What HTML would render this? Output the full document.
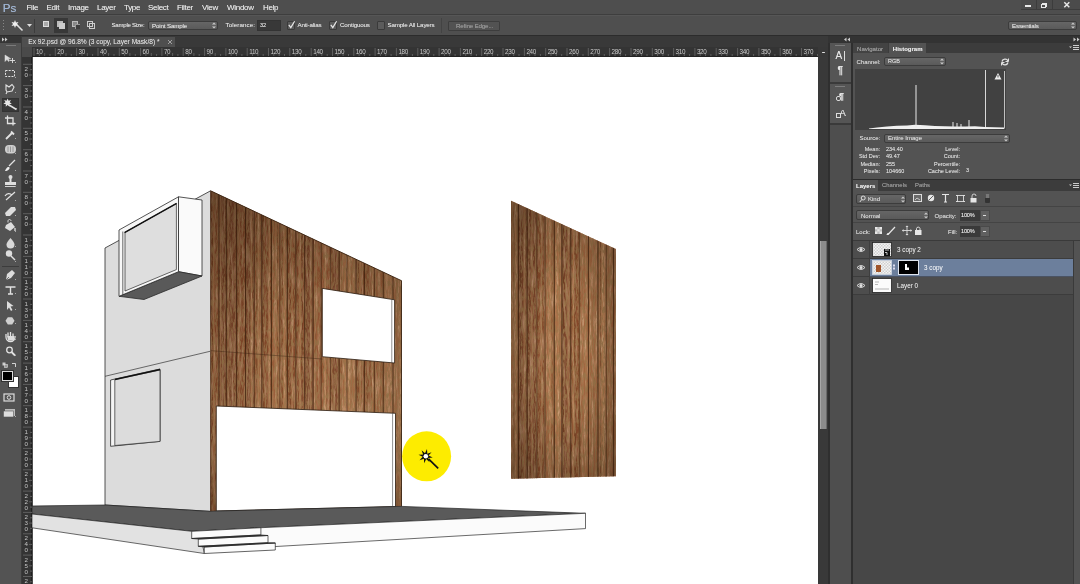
<!DOCTYPE html>
<html><head><meta charset="utf-8">
<style>
*{margin:0;padding:0;box-sizing:border-box}
html,body{width:1080px;height:584px;overflow:hidden;background:#535353;font-family:"Liberation Sans",sans-serif;color:#ddd}
.a{position:absolute}
.t{position:absolute;white-space:nowrap;line-height:1;text-shadow:0 0 0.6px rgba(240,240,240,0.55)}
.m{font-size:8px;color:#e4e4e4;top:3.6px;letter-spacing:-0.3px}
.o{font-size:6.2px;color:#e0e0e0;top:22px;letter-spacing:-0.15px}
.p{font-size:5.9px;color:#d8d8d8}
.cb{position:absolute;width:8px;height:9px;background:#5b5b5b;border:1px solid #3a3a3a;border-radius:1px}
.sel{position:absolute;background:linear-gradient(#666,#5a5a5a);border:1px solid #3c3c3c;border-radius:2px}
.ru{position:absolute;top:48px;font-size:5.6px;color:#cfcfcf;line-height:1}
.tk{position:absolute;top:48px;width:1px;height:8px;background:#555}
html{filter:blur(0.4px)}
</style></head><body>
<!-- menu bar -->
<div class="a" style="left:0;top:0;width:1080px;height:14px;background:#4e4e4e"></div>
<div class="a" style="left:0;top:14px;width:1080px;height:1px;background:#3e3e3e"></div>
<div class="a" style="left:0;top:15px;width:1080px;height:1px;background:#565656"></div>
<div class="t" style="left:2.8px;top:1.8px;font-size:11.6px;color:#9ab3d6;letter-spacing:0px">Ps</div>
<div class="t m" style="left:26.5px">File</div>
<div class="t m" style="left:46.5px">Edit</div>
<div class="t m" style="left:68px">Image</div>
<div class="t m" style="left:97px">Layer</div>
<div class="t m" style="left:124px">Type</div>
<div class="t m" style="left:148px">Select</div>
<div class="t m" style="left:177px">Filter</div>
<div class="t m" style="left:202px">View</div>
<div class="t m" style="left:227px">Window</div>
<div class="t m" style="left:263px">Help</div>
<!-- window buttons -->
<div class="a" style="left:1021px;top:0;width:59px;height:10px;background:#4b4b4b;border-bottom:1px solid #3c3c3c"></div>
<div class="a" style="left:1036px;top:0;width:1px;height:10px;background:#3c3c3c"></div>
<div class="a" style="left:1052px;top:0;width:1px;height:10px;background:#3c3c3c"></div>
<div class="a" style="left:1025px;top:5px;width:6px;height:2px;background:#e8e8e8"></div>
<div class="a" style="left:1042px;top:3px;width:5px;height:4px;border:1px solid #e8e8e8"></div>
<div class="a" style="left:1041px;top:4px;width:5px;height:4px;border:1px solid #e8e8e8;background:#4b4b4b"></div>
<svg class="a" style="left:1062px;top:1px" width="10" height="9"><path d="M2.3 1.3L7.3 6.3M7.3 1.3L2.3 6.3" stroke="#e8e8e8" stroke-width="1.5"/></svg>

<!-- options bar -->
<div class="a" style="left:0;top:16px;width:1080px;height:19px;background:#4f4f4f"></div>
<div class="a" style="left:0;top:35px;width:1080px;height:1px;background:#2c2c2c"></div>
<div class="a" style="left:3px;top:20px;width:1px;height:1px;background:#888"></div>
<div class="a" style="left:3px;top:23px;width:1px;height:1px;background:#888"></div>
<div class="a" style="left:3px;top:26px;width:1px;height:1px;background:#888"></div>
<div class="a" style="left:3px;top:29px;width:1px;height:1px;background:#888"></div>
<svg class="a" style="left:11px;top:19px" width="14" height="13"><path d="M5 5L11.5 11.5" stroke="#e0e0e0" stroke-width="1.6"/><path d="M4 1L5 3.5 7.5 3 6 5 7.5 7 5 6.5 4 9 3 6.5 0.5 7 2 5 0.5 3 3 3.5Z" fill="#eee"/></svg>
<svg class="a" style="left:27px;top:24px" width="5" height="3"><path d="M0 0H5L2.5 3Z" fill="#ddd"/></svg>
<div class="a" style="left:34px;top:19px;width:1px;height:14px;background:#3c3c3c"></div>
<div class="a" style="left:43px;top:21px;width:6px;height:6px;background:#aaa;border:1px solid #ddd"></div>
<div class="a" style="left:54px;top:18px;width:14px;height:15px;background:#383838"></div>
<div class="a" style="left:57px;top:21px;width:6px;height:6px;background:#bbb"></div>
<div class="a" style="left:59px;top:23px;width:6px;height:6px;background:#ccc"></div>
<div class="a" style="left:72px;top:21px;width:6px;height:6px;border:1px solid #bbb;background:#888"></div>
<div class="a" style="left:75px;top:24px;width:5px;height:5px;background:#3d3d3d;border-top:1px solid #999;border-left:1px solid #999"></div>
<div class="a" style="left:87px;top:21px;width:6px;height:6px;border:1px solid #ccc"></div>
<div class="a" style="left:89px;top:23px;width:6px;height:6px;border:1px solid #ccc"></div>

<div class="t o" style="left:111.5px;font-size:6.1px;letter-spacing:-0.25px">Sample Size:</div>
<div class="sel" style="left:148px;top:21px;width:70px;height:9px"></div>
<div class="t o" style="left:152px;top:22.5px">Point Sample</div>
<svg class="a" style="left:212px;top:22px" width="4" height="7"><path d="M0 2.5L2 0.5 4 2.5ZM0 4.5L2 6.5 4 4.5Z" fill="#ccc"/></svg>
<div class="t o" style="left:225.5px;letter-spacing:0.1px">Tolerance:</div>
<div class="a" style="left:257px;top:20px;width:24px;height:11px;background:#383838;border:1px solid #333"></div>
<div class="t o" style="left:260px;top:22.5px;font-size:5.5px">32</div>
<div class="cb" style="left:287px;top:20.5px"></div>
<svg class="a" style="left:287px;top:20px" width="10" height="10"><path d="M1.8 4.8L3.8 7.6 7.6 1.2" stroke="#e8e8e8" stroke-width="1.2" fill="none"/></svg>
<div class="t o" style="left:297.5px">Anti-alias</div>
<div class="cb" style="left:329px;top:20.5px"></div>
<svg class="a" style="left:329px;top:20px" width="10" height="10"><path d="M1.8 4.8L3.8 7.6 7.6 1.2" stroke="#e8e8e8" stroke-width="1.2" fill="none"/></svg>
<div class="t o" style="left:340px">Contiguous</div>
<div class="cb" style="left:377px;top:20.5px"></div>
<div class="t o" style="left:387.5px">Sample All Layers</div>
<div class="a" style="left:441px;top:18px;width:1px;height:15px;background:#434343"></div>
<div class="a" style="left:448px;top:21px;width:52px;height:9.5px;background:#525252;border:1px solid #3d3d3d;border-radius:1px"></div>
<div class="t o" style="left:456px;top:23px;color:#8a8a8a">Refine Edge...</div>
<div class="sel" style="left:1008px;top:21px;width:69px;height:9px"></div>
<div class="t o" style="left:1012px;top:22.5px">Essentials</div>
<svg class="a" style="left:1071px;top:22px" width="4" height="7"><path d="M0 2.5L2 0.5 4 2.5ZM0 4.5L2 6.5 4 4.5Z" fill="#ccc"/></svg>

<!-- doc tab bar -->
<div class="a" style="left:0;top:36px;width:828px;height:11px;background:#393939"></div>
<div class="a" style="left:22px;top:36.5px;width:153px;height:10.5px;background:#4f4f4f"></div>
<div class="t" style="left:28.3px;top:38.5px;font-size:6.6px;color:#d8d8d8">Ex 92.psd @ 96.8% (3 copy, Layer Mask/8) *</div>
<svg class="a" style="left:167px;top:39px" width="6" height="6"><path d="M1 1L5 5M5 1L1 5" stroke="#aaa" stroke-width="0.9"/></svg>
<div class="a" style="left:32px;top:57px;width:786px;height:527px;background:#fff"></div>
<svg class="a" style="left:22px;top:47px" width="796" height="10"><rect x="10" width="786" height="10" fill="#343434"/><rect width="10" height="10" fill="#4a4a4a"/><rect x="10" y="8.6" width="786" height="1.4" fill="#232323"/><path d="M12.0 1V9 M17.3 7V9 M22.7 6V9 M28.0 7V9 M33.3 1V9 M38.6 7V9 M44.0 6V9 M49.3 7V9 M54.6 1V9 M60.0 7V9 M65.3 6V9 M70.6 7V9 M76.0 1V9 M81.3 7V9 M86.6 6V9 M92.0 7V9 M97.3 1V9 M102.6 7V9 M107.9 6V9 M113.3 7V9 M118.6 1V9 M123.9 7V9 M129.3 6V9 M134.6 7V9 M139.9 1V9 M145.3 7V9 M150.6 6V9 M155.9 7V9 M161.2 1V9 M166.6 7V9 M171.9 6V9 M177.2 7V9 M182.6 1V9 M187.9 7V9 M193.2 6V9 M198.6 7V9 M203.9 1V9 M209.2 7V9 M214.5 6V9 M219.9 7V9 M225.2 1V9 M230.5 7V9 M235.9 6V9 M241.2 7V9 M246.5 1V9 M251.8 7V9 M257.2 6V9 M262.5 7V9 M267.8 1V9 M273.2 7V9 M278.5 6V9 M283.8 7V9 M289.2 1V9 M294.5 7V9 M299.8 6V9 M305.2 7V9 M310.5 1V9 M315.8 7V9 M321.1 6V9 M326.5 7V9 M331.8 1V9 M337.1 7V9 M342.5 6V9 M347.8 7V9 M353.1 1V9 M358.4 7V9 M363.8 6V9 M369.1 7V9 M374.4 1V9 M379.8 7V9 M385.1 6V9 M390.4 7V9 M395.8 1V9 M401.1 7V9 M406.4 6V9 M411.8 7V9 M417.1 1V9 M422.4 7V9 M427.7 6V9 M433.1 7V9 M438.4 1V9 M443.7 7V9 M449.1 6V9 M454.4 7V9 M459.7 1V9 M465.1 7V9 M470.4 6V9 M475.7 7V9 M481.0 1V9 M486.4 7V9 M491.7 6V9 M497.0 7V9 M502.4 1V9 M507.7 7V9 M513.0 6V9 M518.4 7V9 M523.7 1V9 M529.0 7V9 M534.3 6V9 M539.7 7V9 M545.0 1V9 M550.3 7V9 M555.7 6V9 M561.0 7V9 M566.3 1V9 M571.7 7V9 M577.0 6V9 M582.3 7V9 M587.6 1V9 M593.0 7V9 M598.3 6V9 M603.6 7V9 M609.0 1V9 M614.3 7V9 M619.6 6V9 M625.0 7V9 M630.3 1V9 M635.6 7V9 M640.9 6V9 M646.3 7V9 M651.6 1V9 M656.9 7V9 M662.3 6V9 M667.6 7V9 M672.9 1V9 M678.2 7V9 M683.6 6V9 M688.9 7V9 M694.2 1V9 M699.6 7V9 M704.9 6V9 M710.2 7V9 M715.6 1V9 M720.9 7V9 M726.2 6V9 M731.6 7V9 M736.9 1V9 M742.2 7V9 M747.5 6V9 M752.9 7V9 M758.2 1V9 M763.5 7V9 M768.9 6V9 M774.2 7V9 M779.5 1V9 M784.9 7V9 M790.2 6V9 M795.5 7V9" stroke="#5e5e5e" stroke-width="1"/><g font-family="Liberation Sans" font-size="6.3" fill="#cacaca" letter-spacing="-0.3"><text x="14.0" y="7">10</text><text x="35.3" y="7">20</text><text x="56.6" y="7">30</text><text x="78.0" y="7">40</text><text x="99.3" y="7">50</text><text x="120.6" y="7">60</text><text x="141.9" y="7">70</text><text x="163.2" y="7">80</text><text x="184.6" y="7">90</text><text x="205.9" y="7">100</text><text x="227.2" y="7">110</text><text x="248.5" y="7">120</text><text x="269.8" y="7">130</text><text x="291.2" y="7">140</text><text x="312.5" y="7">150</text><text x="333.8" y="7">160</text><text x="355.1" y="7">170</text><text x="376.4" y="7">180</text><text x="397.8" y="7">190</text><text x="419.1" y="7">200</text><text x="440.4" y="7">210</text><text x="461.7" y="7">220</text><text x="483.0" y="7">230</text><text x="504.4" y="7">240</text><text x="525.7" y="7">250</text><text x="547.0" y="7">260</text><text x="568.3" y="7">270</text><text x="589.6" y="7">280</text><text x="611.0" y="7">290</text><text x="632.3" y="7">300</text><text x="653.6" y="7">310</text><text x="674.9" y="7">320</text><text x="696.2" y="7">330</text><text x="717.6" y="7">340</text><text x="738.9" y="7">350</text><text x="760.2" y="7">360</text><text x="781.5" y="7">370</text></g></svg>
<svg class="a" style="left:22px;top:57px" width="11" height="527"><rect width="10" height="527" fill="#343434"/><rect x="9" width="1.8" height="527" fill="#202020"/><path d="M1 7.3H10 M8 12.6H10 M7 18.0H10 M8 23.3H10 M1 28.6H10 M8 34.0H10 M7 39.3H10 M8 44.6H10 M1 50.0H10 M8 55.3H10 M7 60.6H10 M8 66.0H10 M1 71.3H10 M8 76.6H10 M7 82.0H10 M8 87.3H10 M1 92.7H10 M8 98.0H10 M7 103.3H10 M8 108.6H10 M1 114.0H10 M8 119.3H10 M7 124.7H10 M8 130.0H10 M1 135.3H10 M8 140.7H10 M7 146.0H10 M8 151.3H10 M1 156.7H10 M8 162.0H10 M7 167.3H10 M8 172.7H10 M1 178.0H10 M8 183.3H10 M7 188.7H10 M8 194.0H10 M1 199.4H10 M8 204.7H10 M7 210.0H10 M8 215.4H10 M1 220.7H10 M8 226.0H10 M7 231.4H10 M8 236.7H10 M1 242.0H10 M8 247.4H10 M7 252.7H10 M8 258.0H10 M1 263.4H10 M8 268.7H10 M7 274.0H10 M8 279.4H10 M1 284.7H10 M8 290.1H10 M7 295.4H10 M8 300.7H10 M1 306.1H10 M8 311.4H10 M7 316.7H10 M8 322.1H10 M1 327.4H10 M8 332.7H10 M7 338.1H10 M8 343.4H10 M1 348.7H10 M8 354.1H10 M7 359.4H10 M8 364.7H10 M1 370.1H10 M8 375.4H10 M7 380.7H10 M8 386.1H10 M1 391.4H10 M8 396.8H10 M7 402.1H10 M8 407.4H10 M1 412.8H10 M8 418.1H10 M7 423.4H10 M8 428.8H10 M1 434.1H10 M8 439.4H10 M7 444.8H10 M8 450.1H10 M1 455.4H10 M8 460.8H10 M7 466.1H10 M8 471.4H10 M1 476.8H10 M8 482.1H10 M7 487.4H10 M8 492.8H10 M1 498.1H10 M8 503.4H10 M7 508.8H10 M8 514.1H10 M1 519.5H10 M8 524.8H10 M7 530.1H10 M8 535.4H10" stroke="#5e5e5e" stroke-width="1"/><g font-family="Liberation Sans" font-size="6.2" fill="#c4c4c4"><text x="2.5" y="13.8">2</text><text x="2.5" y="19.8">0</text><text x="2.5" y="35.1">3</text><text x="2.5" y="41.1">0</text><text x="2.5" y="56.5">4</text><text x="2.5" y="62.5">0</text><text x="2.5" y="77.8">5</text><text x="2.5" y="83.8">0</text><text x="2.5" y="99.2">6</text><text x="2.5" y="105.2">0</text><text x="2.5" y="120.5">7</text><text x="2.5" y="126.5">0</text><text x="2.5" y="141.8">8</text><text x="2.5" y="147.8">0</text><text x="2.5" y="163.2">9</text><text x="2.5" y="169.2">0</text><text x="2.5" y="184.5">1</text><text x="2.5" y="190.5">0</text><text x="2.5" y="196.5">0</text><text x="2.5" y="205.9">1</text><text x="2.5" y="211.9">1</text><text x="2.5" y="217.9">0</text><text x="2.5" y="227.2">1</text><text x="2.5" y="233.2">2</text><text x="2.5" y="239.2">0</text><text x="2.5" y="248.5">1</text><text x="2.5" y="254.5">3</text><text x="2.5" y="260.5">0</text><text x="2.5" y="269.9">1</text><text x="2.5" y="275.9">4</text><text x="2.5" y="281.9">0</text><text x="2.5" y="291.2">1</text><text x="2.5" y="297.2">5</text><text x="2.5" y="303.2">0</text><text x="2.5" y="312.6">1</text><text x="2.5" y="318.6">6</text><text x="2.5" y="324.6">0</text><text x="2.5" y="333.9">1</text><text x="2.5" y="339.9">7</text><text x="2.5" y="345.9">0</text><text x="2.5" y="355.2">1</text><text x="2.5" y="361.2">8</text><text x="2.5" y="367.2">0</text><text x="2.5" y="376.6">1</text><text x="2.5" y="382.6">9</text><text x="2.5" y="388.6">0</text><text x="2.5" y="397.9">2</text><text x="2.5" y="403.9">0</text><text x="2.5" y="409.9">0</text><text x="2.5" y="419.3">2</text><text x="2.5" y="425.3">1</text><text x="2.5" y="431.3">0</text><text x="2.5" y="440.6">2</text><text x="2.5" y="446.6">2</text><text x="2.5" y="452.6">0</text><text x="2.5" y="461.9">2</text><text x="2.5" y="467.9">3</text><text x="2.5" y="473.9">0</text><text x="2.5" y="483.3">2</text><text x="2.5" y="489.3">4</text><text x="2.5" y="495.3">0</text><text x="2.5" y="504.6">2</text><text x="2.5" y="510.6">5</text><text x="2.5" y="516.6">0</text><text x="2.5" y="526.0">2</text><text x="2.5" y="532.0">6</text><text x="2.5" y="538.0">0</text></g></svg>
<!-- toolbar -->
<div class="a" style="left:0;top:36px;width:21px;height:548px;background:#535353"></div>
<div class="a" style="left:0;top:36px;width:21px;height:7px;background:#363636"></div>
<div class="a" style="left:21px;top:36px;width:1px;height:548px;background:#3b3b3b"></div>
<svg class="a" style="left:2px;top:37px" width="6" height="5"><path d="M0 0.5L2.5 2.5 0 4.5ZM3 0.5L5.5 2.5 3 4.5Z" fill="#ccc"/></svg>
<div class="a" style="left:6px;top:45px;width:10px;height:1px;background:#7a7a7a"></div>
<div class="a" style="left:1.5px;top:98px;width:17.5px;height:13.5px;background:#383838;border:1px solid #333"></div>
<div class="a" style="left:2px;top:266px;width:17px;height:1px;background:#3c3c3c"></div>
<svg class="a" style="left:0;top:50px" width="21" height="380" fill="none" stroke="#e2e2e2" stroke-width="1.2">
 <!-- move y58 -->
 <path d="M5 5V11.5L7 9.5 8.5 11.5 9.5 10.8 8.3 8.8H10.8Z" fill="#ddd" stroke="#ddd" stroke-width="0.5"/><path d="M12.5 8V13M10 10.5H15" stroke-width="0.9"/>
 <!-- marquee y74 -->
 <rect x="5.5" y="20.5" width="9" height="6" stroke-dasharray="2 1.2" stroke-width="1"/>
 <!-- lasso y89 -->
 <path d="M6 35L9 37 12 34.5 14 37 12 41 7 42 6 40Z M7 42L6 44" stroke-width="1.1"/>
 <!-- wand y102 -->
 <path d="M9 55L16.5 59.5" stroke-width="1.5"/><path d="M7.6 48.5L8.6 50.8L11.0 50.1L9.7 52.3L11.8 53.8L9.3 54.2L9.5 56.7L7.6 55.0L5.7 56.7L5.9 54.2L3.4 53.8L5.5 52.3L4.2 50.1L6.6 50.8Z" fill="#e6e6e6" stroke="none"/>
 <!-- crop y122 -->
 <path d="M7.5 65.5V73.5H15M5 68H13V75.5" stroke-width="1.3"/>
 <!-- eyedropper y134 -->
 <path d="M6 89L12 83M11 81.5L14 84.5" stroke-width="1.8"/>
 <!-- heal y149 -->
 <rect x="5" y="95" width="11" height="8.5" rx="4" fill="#cfcfcf" stroke="none"/><path d="M8 96.5V102M10.5 96.5V102M13 96.5V102" stroke="#8a8a8a" stroke-width="0.8"/>
 <!-- brush y167 -->
 <path d="M9 116L15 110" stroke-width="1.3"/><path d="M5 121C6 118 8 116 9.5 117.5 10 119 8 121 5 121Z" fill="#eee" stroke="none"/>
 <!-- stamp y182 -->
 <path d="M10.5 127V132" stroke-width="2"/><circle cx="10.5" cy="127" r="2" fill="#ddd" stroke="none"/><rect x="5" y="132" width="11" height="3" fill="#ddd" stroke="none"/><path d="M5 136.5H16" stroke-width="0.9"/>
 <!-- history brush y197 -->
 <path d="M6 150L15 142M5 146C7 143 10 143 12 145" stroke-width="1.2"/>
 <!-- eraser y212 -->
 <path d="M5 163L11 157H15L16 160 10 166H6Z" fill="#ddd" stroke="none"/>
 <!-- bucket y227 -->
 <path d="M6 175L11 172 15 177 10 181 5 178Z" fill="#ddd" stroke="none"/><path d="M8 172.5V171C8 169 11 169 11 171" stroke-width="0.9"/><path d="M15 178V181" stroke-width="1.3"/>
 <!-- blur drop y242 -->
 <path d="M10.5 188C8 191 6.5 193 6.5 194.5A4 4 0 0 0 14.5 194.5C14.5 193 13 191 10.5 188Z" fill="#d8d8d8" stroke="none"/>
 <!-- dodge y256 -->
 <circle cx="9" cy="203.5" r="3.2" fill="#ddd" stroke="none"/><path d="M11 206L15 210" stroke-width="1.4"/>
 <!-- pen y275 -->
 <path d="M6 230L7 224 12 220 15 223 11 228Z" fill="#ddd" stroke="none"/><path d="M6 230L9 227" stroke="#555" stroke-width="0.8"/>
 <!-- type y290 -->
 <path d="M5.5 237H15.5M10.5 237V244M8 244H13" stroke-width="1.4"/>
 <!-- path select y305 -->
 <path d="M7 251V260L9 257.5 11 261 12.5 260 10.5 256.5 13.5 256Z" fill="#ddd" stroke="none"/>
 <!-- shape y320 -->
 <path d="M5.5 270.8L7.8 267.3H12.2L14.5 270.8 12.2 274.5H7.8Z" fill="#cfcfcf" stroke="none"/>
 <!-- hand y337 -->
 <path d="M6 287V284M8 286V282.5M10.5 286V282M13 286V283.5M6 287C6 289.5 8 291.5 10.5 291.5 13 291.5 15 289.5 15 287V286" stroke-width="1.3"/><path d="M7 286H14V290.5H8Z" fill="#ddd" stroke="none"/>
 <!-- zoom y352 -->
 <circle cx="9.5" cy="300" r="2.8" stroke-width="1.3"/><path d="M11.5 302L15 305.5" stroke-width="1.8"/>
 <!-- default colors swap y364 -->
 <rect x="2.5" y="312.5" width="3" height="3" fill="#ccc" stroke="none"/><rect x="4.5" y="314.5" width="3" height="3" fill="#999" stroke="#ddd" stroke-width="0.6"/><path d="M12 313.5H15.5V317" stroke-width="0.9"/>
</svg>
<div class="a" style="left:7.5px;top:376px;width:11px;height:12px;background:#fff;border:1px solid #333"></div>
<div class="a" style="left:2px;top:370.5px;width:10.5px;height:10.5px;background:#000;border:1px solid #ddd;outline:1px solid #333"></div>
<svg class="a" style="left:0;top:390px" width="21" height="30" fill="none" stroke="#ddd">
 <rect x="4" y="4" width="10" height="7" stroke-width="1.2"/><circle cx="9" cy="7.5" r="1.8" stroke-width="1"/>
 <rect x="5" y="19" width="10" height="7" fill="#bbb" stroke="none"/><rect x="3.5" y="21" width="10" height="6" fill="#ddd" stroke="#555" stroke-width="0.6"/>
</svg>
<svg class="a" style="left:14px;top:60px" width="7" height="360" fill="#aaa">
<rect x="1" y="2" width="1" height="1"/><rect x="1" y="17" width="1" height="1"/><rect x="1" y="32" width="1" height="1"/><rect x="2" y="48" width="1" height="1"/><rect x="1" y="63" width="1" height="1"/><rect x="1" y="78" width="1" height="1"/><rect x="1" y="93" width="1" height="1"/><rect x="1" y="110" width="1" height="1"/><rect x="1" y="126" width="1" height="1"/><rect x="1" y="140" width="1" height="1"/><rect x="1" y="155" width="1" height="1"/><rect x="1" y="171" width="1" height="1"/><rect x="1" y="186" width="1" height="1"/><rect x="1" y="201" width="1" height="1"/><rect x="1" y="219" width="1" height="1"/><rect x="1" y="233" width="1" height="1"/><rect x="1" y="249" width="1" height="1"/><rect x="1" y="263" width="1" height="1"/><rect x="1" y="279" width="1" height="1"/><rect x="1" y="295" width="1" height="1"/><rect x="1" y="356" width="1" height="1"/>
</svg>

<svg class="a" style="left:32px;top:57px" width="786" height="527" viewBox="32 57 786 527">
<defs>
<filter id="grain" x="0" y="0" width="100%" height="100%"><feTurbulence type="fractalNoise" baseFrequency="0.5 0.045" numOctaves="3" seed="3"/><feColorMatrix values="0 0 0 0 0.80  0 0 0 0 0.56  0 0 0 0 0.36  2.8 0 0 0 -1.15"/></filter>
<filter id="grain2" x="0" y="0" width="100%" height="100%"><feTurbulence type="fractalNoise" baseFrequency="0.9 0.15" numOctaves="3" seed="11"/><feColorMatrix values="0 0 0 0 0.32  0 0 0 0 0.18  0 0 0 0 0.07  -3.6 0 0 0 2.15"/></filter>
<clipPath id="wf"><path d="M210.6 190.8L401.5 280.7V506.4L210.5 511.4Z"/></clipPath>
<clipPath id="wp"><path d="M511 200.7L615.8 249V476.2L511.1 478.8Z"/></clipPath>
<linearGradient id="wg" x1="0" y1="0" x2="0" y2="1"><stop offset="0" stop-color="#2a1408" stop-opacity="0.28"/><stop offset="0.45" stop-color="#2a1408" stop-opacity="0.05"/><stop offset="0.75" stop-color="#f0c090" stop-opacity="0.06"/><stop offset="1" stop-color="#2a1408" stop-opacity="0.1"/></linearGradient>
<radialGradient id="vg" cx="0.5" cy="0.55" r="0.65"><stop offset="0.35" stop-color="#1e0e04" stop-opacity="0"/><stop offset="1" stop-color="#1e0e04" stop-opacity="0.38"/></radialGradient>
</defs>
<path d="M105 248L210.6 190.8V511.4L105 505Z" fill="#dcdcdc" stroke="#2a2a2a" stroke-width="0.8"/>
<path d="M105 376.3L210.5 351.2" stroke="#333" stroke-width="0.7"/>
<path d="M110.6 380L160 369V441.4L110.6 446.3Z" fill="#f4f4f4" stroke="#2a2a2a" stroke-width="0.8"/>
<path d="M114.8 379.5L160 370V441.4L114.8 445.5Z" fill="#dcdcdc" stroke="#2a2a2a" stroke-width="0.7"/>
<path d="M115 379.5L160 369.5" stroke="#111" stroke-width="1.3"/>
<path d="M178.5 196.8L202 200V276L178.5 271.7Z" fill="#fafafa" stroke="#2a2a2a" stroke-width="0.8"/>
<path d="M119 296.3L178.5 271.7L202 276L144 299.5Z" fill="#595959" stroke="#2a2a2a" stroke-width="0.8"/>
<path d="M119 230L178.5 196.8V271.7L119 296.3Z" fill="#f7f7f7" stroke="#2a2a2a" stroke-width="0.8"/>
<path d="M122.8 231.5V294.8" stroke="#2a2a2a" stroke-width="0.7"/>
<path d="M125 232.3L176.4 203.6V269.6L125 291Z" fill="#dedede" stroke="#2a2a2a" stroke-width="0.7"/>
<path d="M124.5 232.6L176.6 203.4" stroke="#111" stroke-width="1.5"/>
<g clip-path="url(#wf)">
<rect x="210.0" y="185" width="8.6" height="330" fill="#84492a"/>
<rect x="213.4" y="185" width="1.1" height="330" fill="#c08c5e" opacity="0.64"/>
<rect x="211.5" y="185" width="1.1" height="330" fill="#5a3218" opacity="0.52"/>
<rect x="218.3" y="185" width="7.9" height="330" fill="#7c462b"/>
<rect x="220.1" y="185" width="1.1" height="330" fill="#c08c5e" opacity="0.50"/>
<rect x="223.5" y="185" width="0.7" height="330" fill="#5a3218" opacity="0.32"/>
<rect x="225.8" y="185" width="10.4" height="330" fill="#7c462b"/>
<rect x="227.7" y="185" width="1.3" height="330" fill="#c08c5e" opacity="0.54"/>
<rect x="227.8" y="185" width="0.9" height="330" fill="#5a3218" opacity="0.41"/>
<rect x="236.0" y="185" width="9.3" height="330" fill="#84492a"/>
<rect x="238.0" y="185" width="1.7" height="330" fill="#c08c5e" opacity="0.42"/>
<rect x="237.6" y="185" width="1.2" height="330" fill="#5a3218" opacity="0.42"/>
<rect x="245.0" y="185" width="9.1" height="330" fill="#7c462b"/>
<rect x="250.6" y="185" width="1.6" height="330" fill="#c08c5e" opacity="0.67"/>
<rect x="248.2" y="185" width="0.8" height="330" fill="#5a3218" opacity="0.30"/>
<rect x="253.7" y="185" width="7.8" height="330" fill="#8e5432"/>
<rect x="257.4" y="185" width="2.1" height="330" fill="#c08c5e" opacity="0.61"/>
<rect x="256.2" y="185" width="1.4" height="330" fill="#5a3218" opacity="0.29"/>
<rect x="261.3" y="185" width="9.9" height="330" fill="#84492a"/>
<rect x="268.5" y="185" width="1.5" height="330" fill="#c08c5e" opacity="0.69"/>
<rect x="262.8" y="185" width="1.0" height="330" fill="#5a3218" opacity="0.49"/>
<rect x="270.9" y="185" width="8.6" height="330" fill="#9a5e3a"/>
<rect x="275.2" y="185" width="1.7" height="330" fill="#c08c5e" opacity="0.51"/>
<rect x="276.7" y="185" width="1.4" height="330" fill="#5a3218" opacity="0.39"/>
<rect x="279.2" y="185" width="7.8" height="330" fill="#8e5432"/>
<rect x="283.3" y="185" width="2.2" height="330" fill="#c08c5e" opacity="0.64"/>
<rect x="281.6" y="185" width="0.9" height="330" fill="#5a3218" opacity="0.45"/>
<rect x="286.7" y="185" width="9.0" height="330" fill="#84492a"/>
<rect x="291.3" y="185" width="1.6" height="330" fill="#c08c5e" opacity="0.43"/>
<rect x="289.4" y="185" width="1.2" height="330" fill="#5a3218" opacity="0.37"/>
<rect x="295.3" y="185" width="9.1" height="330" fill="#84492a"/>
<rect x="299.2" y="185" width="1.7" height="330" fill="#c08c5e" opacity="0.66"/>
<rect x="301.5" y="185" width="1.3" height="330" fill="#5a3218" opacity="0.33"/>
<rect x="304.1" y="185" width="8.7" height="330" fill="#7c462b"/>
<rect x="310.3" y="185" width="1.2" height="330" fill="#c08c5e" opacity="0.41"/>
<rect x="306.5" y="185" width="0.8" height="330" fill="#5a3218" opacity="0.40"/>
<rect x="312.5" y="185" width="8.4" height="330" fill="#945634"/>
<rect x="314.7" y="185" width="1.6" height="330" fill="#c08c5e" opacity="0.56"/>
<rect x="315.3" y="185" width="0.7" height="330" fill="#5a3218" opacity="0.51"/>
<rect x="320.6" y="185" width="9.6" height="330" fill="#945634"/>
<rect x="324.7" y="185" width="2.0" height="330" fill="#c08c5e" opacity="0.68"/>
<rect x="326.2" y="185" width="1.0" height="330" fill="#5a3218" opacity="0.37"/>
<rect x="329.9" y="185" width="9.0" height="330" fill="#7c462b"/>
<rect x="331.7" y="185" width="1.1" height="330" fill="#c08c5e" opacity="0.42"/>
<rect x="331.9" y="185" width="0.9" height="330" fill="#5a3218" opacity="0.27"/>
<rect x="338.6" y="185" width="8.1" height="330" fill="#a06640"/>
<rect x="344.1" y="185" width="1.7" height="330" fill="#c08c5e" opacity="0.37"/>
<rect x="340.7" y="185" width="0.9" height="330" fill="#5a3218" opacity="0.44"/>
<rect x="346.4" y="185" width="9.4" height="330" fill="#a26a44"/>
<rect x="348.6" y="185" width="2.0" height="330" fill="#c08c5e" opacity="0.70"/>
<rect x="350.4" y="185" width="1.0" height="330" fill="#5a3218" opacity="0.28"/>
<rect x="355.5" y="185" width="8.6" height="330" fill="#8e5432"/>
<rect x="359.3" y="185" width="1.8" height="330" fill="#c08c5e" opacity="0.53"/>
<rect x="357.7" y="185" width="1.4" height="330" fill="#5a3218" opacity="0.36"/>
<rect x="363.8" y="185" width="10.3" height="330" fill="#8e5432"/>
<rect x="371.7" y="185" width="2.0" height="330" fill="#c08c5e" opacity="0.59"/>
<rect x="366.8" y="185" width="0.9" height="330" fill="#5a3218" opacity="0.30"/>
<rect x="373.8" y="185" width="9.2" height="330" fill="#9a5e3a"/>
<rect x="378.8" y="185" width="1.7" height="330" fill="#c08c5e" opacity="0.63"/>
<rect x="379.7" y="185" width="0.8" height="330" fill="#5a3218" opacity="0.32"/>
<rect x="382.7" y="185" width="10.0" height="330" fill="#aa7048"/>
<rect x="387.5" y="185" width="1.4" height="330" fill="#c08c5e" opacity="0.36"/>
<rect x="383.9" y="185" width="0.8" height="330" fill="#5a3218" opacity="0.33"/>
<rect x="392.4" y="185" width="10.5" height="330" fill="#a26a44"/>
<rect x="399.3" y="185" width="1.9" height="330" fill="#c08c5e" opacity="0.47"/>
<rect x="400.9" y="185" width="0.7" height="330" fill="#5a3218" opacity="0.28"/>
<rect x="210" y="185" width="192" height="330" filter="url(#grain)" opacity="0.5"/>
<rect x="210" y="185" width="192" height="330" filter="url(#grain2)" opacity="0.85"/>
<rect x="210.0" y="185" width="1.1" height="330" fill="#43240f" opacity="0.64"/>
<rect x="218.3" y="185" width="1.1" height="330" fill="#43240f" opacity="0.80"/>
<rect x="225.8" y="185" width="1.1" height="330" fill="#43240f" opacity="0.78"/>
<rect x="236.0" y="185" width="1.1" height="330" fill="#43240f" opacity="0.80"/>
<rect x="245.0" y="185" width="1.1" height="330" fill="#43240f" opacity="0.86"/>
<rect x="253.7" y="185" width="1.1" height="330" fill="#43240f" opacity="0.72"/>
<rect x="261.3" y="185" width="1.1" height="330" fill="#43240f" opacity="0.88"/>
<rect x="270.9" y="185" width="1.1" height="330" fill="#43240f" opacity="0.82"/>
<rect x="279.2" y="185" width="1.1" height="330" fill="#43240f" opacity="0.56"/>
<rect x="286.7" y="185" width="1.1" height="330" fill="#43240f" opacity="0.92"/>
<rect x="295.3" y="185" width="1.1" height="330" fill="#43240f" opacity="0.72"/>
<rect x="304.1" y="185" width="1.1" height="330" fill="#43240f" opacity="0.79"/>
<rect x="312.5" y="185" width="1.1" height="330" fill="#43240f" opacity="0.93"/>
<rect x="320.6" y="185" width="1.1" height="330" fill="#43240f" opacity="0.71"/>
<rect x="329.9" y="185" width="1.1" height="330" fill="#43240f" opacity="0.55"/>
<rect x="338.6" y="185" width="1.1" height="330" fill="#43240f" opacity="0.93"/>
<rect x="346.4" y="185" width="1.1" height="330" fill="#43240f" opacity="0.59"/>
<rect x="355.5" y="185" width="1.1" height="330" fill="#43240f" opacity="0.83"/>
<rect x="363.8" y="185" width="1.1" height="330" fill="#43240f" opacity="0.86"/>
<rect x="373.8" y="185" width="1.1" height="330" fill="#43240f" opacity="0.71"/>
<rect x="382.7" y="185" width="1.1" height="330" fill="#43240f" opacity="0.83"/>
<rect x="392.4" y="185" width="1.1" height="330" fill="#43240f" opacity="0.74"/>
<rect x="210" y="185" width="192" height="330" fill="url(#wg)"/>
<rect x="200" y="180" width="212" height="340" fill="url(#vg)" opacity="0.6"/>
</g>
<path d="M210.6 190.8L401.5 280.7V506.4" fill="none" stroke="#3a2412" stroke-width="0.9"/>
<path d="M211 350.7L322.3 359" stroke="#3a2412" stroke-width="0.6" opacity="0.7"/>
<path d="M322.3 288.4L394.6 299.8V363L322.3 356.7Z" fill="#fff" stroke="#2a1a0e" stroke-width="0.8"/>
<path d="M391.8 299.4V362.8" stroke="#444" stroke-width="0.6"/>
<path d="M216.3 406L395.5 413.3V506.6L216.3 511Z" fill="#fff" stroke="#2a1a0e" stroke-width="0.8"/>
<path d="M392.6 413.2V506.6" stroke="#444" stroke-width="0.6"/>
<g clip-path="url(#wp)">
<rect x="510.0" y="195" width="8.1" height="287" fill="#a26a44"/>
<rect x="514.2" y="195" width="2.1" height="287" fill="#c08c5e" opacity="0.64"/>
<rect x="513.5" y="195" width="1.1" height="287" fill="#5a3218" opacity="0.49"/>
<rect x="517.8" y="195" width="9.1" height="287" fill="#7c462b"/>
<rect x="523.4" y="195" width="1.9" height="287" fill="#c08c5e" opacity="0.52"/>
<rect x="519.9" y="195" width="1.2" height="287" fill="#5a3218" opacity="0.35"/>
<rect x="526.6" y="195" width="10.0" height="287" fill="#7c462b"/>
<rect x="531.0" y="195" width="1.9" height="287" fill="#c08c5e" opacity="0.38"/>
<rect x="528.7" y="195" width="1.4" height="287" fill="#5a3218" opacity="0.26"/>
<rect x="536.3" y="195" width="8.5" height="287" fill="#84492a"/>
<rect x="540.7" y="195" width="1.7" height="287" fill="#c08c5e" opacity="0.52"/>
<rect x="542.6" y="195" width="0.7" height="287" fill="#5a3218" opacity="0.41"/>
<rect x="544.5" y="195" width="9.5" height="287" fill="#a06640"/>
<rect x="549.0" y="195" width="2.1" height="287" fill="#c08c5e" opacity="0.50"/>
<rect x="551.3" y="195" width="1.3" height="287" fill="#5a3218" opacity="0.31"/>
<rect x="553.7" y="195" width="8.0" height="287" fill="#aa7048"/>
<rect x="558.4" y="195" width="1.4" height="287" fill="#c08c5e" opacity="0.54"/>
<rect x="559.0" y="195" width="0.6" height="287" fill="#5a3218" opacity="0.47"/>
<rect x="561.4" y="195" width="9.1" height="287" fill="#7c462b"/>
<rect x="567.3" y="195" width="2.1" height="287" fill="#c08c5e" opacity="0.40"/>
<rect x="563.3" y="195" width="1.0" height="287" fill="#5a3218" opacity="0.51"/>
<rect x="570.2" y="195" width="8.9" height="287" fill="#84492a"/>
<rect x="572.6" y="195" width="1.6" height="287" fill="#c08c5e" opacity="0.60"/>
<rect x="574.6" y="195" width="0.9" height="287" fill="#5a3218" opacity="0.41"/>
<rect x="578.8" y="195" width="9.5" height="287" fill="#a06640"/>
<rect x="585.3" y="195" width="1.1" height="287" fill="#c08c5e" opacity="0.42"/>
<rect x="580.1" y="195" width="0.7" height="287" fill="#5a3218" opacity="0.39"/>
<rect x="587.9" y="195" width="9.8" height="287" fill="#a06640"/>
<rect x="592.1" y="195" width="1.7" height="287" fill="#c08c5e" opacity="0.53"/>
<rect x="592.5" y="195" width="1.2" height="287" fill="#5a3218" opacity="0.39"/>
<rect x="597.4" y="195" width="8.5" height="287" fill="#aa7048"/>
<rect x="602.2" y="195" width="2.1" height="287" fill="#c08c5e" opacity="0.68"/>
<rect x="599.9" y="195" width="1.0" height="287" fill="#5a3218" opacity="0.53"/>
<rect x="605.7" y="195" width="7.5" height="287" fill="#a06640"/>
<rect x="608.6" y="195" width="1.4" height="287" fill="#c08c5e" opacity="0.58"/>
<rect x="608.7" y="195" width="0.8" height="287" fill="#5a3218" opacity="0.34"/>
<rect x="612.9" y="195" width="9.4" height="287" fill="#9a5e3a"/>
<rect x="615.2" y="195" width="2.1" height="287" fill="#c08c5e" opacity="0.69"/>
<rect x="615.3" y="195" width="1.4" height="287" fill="#5a3218" opacity="0.37"/>
<rect x="510" y="195" width="107" height="287" filter="url(#grain)" opacity="0.5"/>
<rect x="510" y="195" width="107" height="287" filter="url(#grain2)" opacity="0.85"/>
<rect x="510.0" y="195" width="1.1" height="287" fill="#43240f" opacity="0.58"/>
<rect x="517.8" y="195" width="1.1" height="287" fill="#43240f" opacity="0.87"/>
<rect x="526.6" y="195" width="1.1" height="287" fill="#43240f" opacity="0.79"/>
<rect x="536.3" y="195" width="1.1" height="287" fill="#43240f" opacity="0.56"/>
<rect x="544.5" y="195" width="1.1" height="287" fill="#43240f" opacity="0.65"/>
<rect x="553.7" y="195" width="1.1" height="287" fill="#43240f" opacity="0.91"/>
<rect x="561.4" y="195" width="1.1" height="287" fill="#43240f" opacity="0.86"/>
<rect x="570.2" y="195" width="1.1" height="287" fill="#43240f" opacity="0.77"/>
<rect x="578.8" y="195" width="1.1" height="287" fill="#43240f" opacity="0.56"/>
<rect x="587.9" y="195" width="1.1" height="287" fill="#43240f" opacity="0.76"/>
<rect x="597.4" y="195" width="1.1" height="287" fill="#43240f" opacity="0.89"/>
<rect x="605.7" y="195" width="1.1" height="287" fill="#43240f" opacity="0.60"/>
<rect x="612.9" y="195" width="1.1" height="287" fill="#43240f" opacity="0.74"/>
<rect x="510" y="195" width="107" height="287" fill="url(#vg)"/>
</g>
<path d="M32 506L105 505L210.3 511.4L216.3 511L392.5 506.6L402 506.4L585.5 513.3L260.9 527.7L191.7 531.3L32 514Z" fill="#5a5a5a" stroke="#222" stroke-width="0.7"/>
<path d="M32 514L200 532.2L204.3 553.5L32 527.8Z" fill="#e2e2e2" stroke="#2a2a2a" stroke-width="0.7"/>
<path d="M250 528.2L585.5 513.3V528.6L250 548Z" fill="#fbfbfb" stroke="#2a2a2a" stroke-width="0.7"/>
<path d="M204.3 547L275.3 543V550L204.3 553.5Z" fill="#fbfbfb" stroke="#222" stroke-width="0.7"/>
<path d="M198.3 539.1L268 535.5V542.7L198.3 546.3Z" fill="#fbfbfb" stroke="#222" stroke-width="0.7"/>
<path d="M191.7 531.3L260.9 527.7V534.9L191.7 538.5Z" fill="#fbfbfb" stroke="#222" stroke-width="0.7"/>
<path d="M191.7 538.5L260.9 534.9L268 535.5L198.3 539.1Z" fill="#333" stroke="#222" stroke-width="0.6"/>
<path d="M198.3 546.3L268 542.7L275.3 543L204.3 547Z" fill="#333" stroke="#222" stroke-width="0.6"/>
<ellipse cx="426.6" cy="456.3" rx="24.5" ry="25" fill="#fdec00"/>
<path d="M428.5 458.8L438.2 468.3" stroke="#111" stroke-width="1.7"/>
<path d="M432.7 457.6L428.1 457.9L429.6 462.2L426.2 459.1L424.2 463.3L423.9 458.7L419.6 460.2L422.7 456.8L418.5 454.8L423.1 454.5L421.6 450.2L425.0 453.3L427.0 449.1L427.3 453.7L431.6 452.2L428.5 455.6Z" fill="#111"/>
<circle cx="425.8" cy="456.2" r="2.3" fill="#fff"/>
</svg>
<!-- scrollbar -->
<div class="a" style="left:818px;top:47px;width:10px;height:537px;background:#393939"></div>
<div class="a" style="left:818px;top:47px;width:10px;height:10px;background:#383838"></div>
<div class="a" style="left:821.5px;top:51.5px;width:3.5px;height:1.5px;background:#e0e0e0;border-radius:1px"></div>
<div class="a" style="left:820px;top:241px;width:7px;height:188px;background:#8c8c8c;border-left:1px solid #a8a8a8;border-right:1px solid #6a6a6a"></div>
<!-- dock header -->
<div class="a" style="left:828px;top:36px;width:252px;height:7px;background:#333"></div>
<svg class="a" style="left:844px;top:37px" width="7" height="5"><path d="M2.5 0.5L0 2.5 2.5 4.5ZM6 0.5L3.5 2.5 6 4.5Z" fill="#ccc"/></svg>
<svg class="a" style="left:1073px;top:37px" width="7" height="5"><path d="M0.5 0.5L3 2.5 0.5 4.5ZM4 0.5L6.5 2.5 4 4.5Z" fill="#ccc"/></svg>
<div class="a" style="left:828px;top:43px;width:2px;height:541px;background:#2f2f2f"></div>
<div class="a" style="left:830px;top:43px;width:21px;height:541px;background:#4e4e4e"></div>
<div class="a" style="left:830px;top:43px;width:21px;height:39px;background:#555"></div>
<div class="a" style="left:830px;top:82px;width:21px;height:2px;background:#3a3a3a"></div>
<div class="a" style="left:830px;top:84px;width:21px;height:39px;background:#555"></div>
<div class="a" style="left:830px;top:123px;width:21px;height:2px;background:#3a3a3a"></div>
<div class="a" style="left:835px;top:45px;width:10px;height:1px;background:#7c7c7c"></div>
<div class="a" style="left:835px;top:86px;width:10px;height:1px;background:#7c7c7c"></div>
<div class="t" style="left:835.5px;top:51px;font-size:10px;color:#e6e6e6">A</div>
<div class="a" style="left:844px;top:51px;width:1px;height:10px;background:#ddd"></div>
<div class="t" style="left:837.5px;top:66px;font-size:10px;color:#e6e6e6;font-weight:bold">&#182;</div>
<div class="t" style="left:839px;top:92px;font-size:9px;color:#e6e6e6;font-weight:bold">&#182;</div>
<div class="a" style="left:835.5px;top:96px;width:5px;height:5px;border:1px solid #ddd;border-radius:2px;background:#4e4e4e"></div>
<div class="t" style="left:839.5px;top:108px;font-size:9.5px;color:#e6e6e6">A</div>
<div class="a" style="left:835.5px;top:113px;width:5px;height:5px;border:1px solid #ddd;background:#555"></div>
<div class="a" style="left:851px;top:43px;width:2px;height:541px;background:#2f2f2f"></div>

<!-- histogram panel group -->
<div class="a" style="left:853px;top:43px;width:227px;height:10px;background:#3c3c3c"></div>
<div class="a" style="left:853px;top:43px;width:35px;height:10px;background:#434343"></div>
<div class="a" style="left:889px;top:43px;width:37px;height:10px;background:#535353"></div>
<div class="t p" style="left:857px;top:45.5px;color:#969696;font-size:6.1px">Navigator</div>
<div class="t p" style="left:892.8px;top:45.5px;color:#e8e8e8;font-size:6px;font-weight:bold">Histogram</div>
<svg class="a" style="left:1069px;top:44px" width="10" height="7"><path d="M4 1.5H10M4 3.5H10M4 5.5H10" stroke="#ccc" stroke-width="1"/><path d="M0 2.5H3L1.5 4Z" fill="#ccc"/></svg>
<div class="a" style="left:853px;top:53px;width:227px;height:126px;background:#535353"></div>
<div class="t p" style="left:856.5px;top:58.5px;font-size:6px">Channel:</div>
<div class="sel" style="left:884px;top:57px;width:62px;height:9px"></div>
<div class="t p" style="left:888px;top:58.8px;font-size:5.5px">RGB</div>
<svg class="a" style="left:940px;top:58px" width="4" height="7"><path d="M0 2.5L2 0.5 4 2.5ZM0 4.5L2 6.5 4 4.5Z" fill="#ccc"/></svg>
<svg class="a" style="left:1000px;top:57px" width="10" height="10" fill="none" stroke="#e0e0e0" stroke-width="1.3"><path d="M2 4.5A3.2 3.2 0 0 1 8 4M8 5.5A3.2 3.2 0 0 1 2 6"/><path d="M8.5 1.5V4.5H5.5M1.5 8.5V5.5H4.5" stroke-width="1"/></svg>
<!-- histogram graph -->
<svg class="a" style="left:855px;top:69px" width="151" height="61">
<rect width="151" height="61" fill="#414141"/>
<path d="M149.5 2V59.5" fill="none" stroke="#cfcfcf" stroke-width="0.9"/>
<path d="M130.5 1V59" stroke="#d8d8d8" stroke-width="1"/>
<path d="M14 59.5L22 58.5 32 57.5 42 56.8 52 56.5 60 55.8 70 56.2 80 57 90 57.2 100 57.5 110 57.5 120 57.3 130 58 149 58.5V60H14Z" fill="#f0f0f0"/>
<path d="M61 16V59M98 53V59M102 54V59M106 55V59M114 51V59" stroke="#eaeaea" stroke-width="1"/>
<path d="M143 4L146.5 10.5H139.5Z" fill="#eee"/><path d="M143 6V8.5" stroke="#414141" stroke-width="0.9"/>
</svg>
<div class="t p" style="left:859.5px;top:134.5px;font-size:6px">Source:</div>
<div class="sel" style="left:884px;top:133.5px;width:126px;height:9px"></div>
<div class="t p" style="left:888px;top:135px;font-size:6px">Entire Image</div>
<svg class="a" style="left:1004px;top:134.5px" width="4" height="7"><path d="M0 2.5L2 0.5 4 2.5ZM0 4.5L2 6.5 4 4.5Z" fill="#ccc"/></svg>
<div class="t p" style="left:820px;top:145.5px;width:60px;text-align:right;font-size:5.5px;line-height:7.5px;color:#dcdcdc">Mean:<br>Std Dev:<br>Median:<br>Pixels:</div>
<div class="t p" style="left:886px;top:145.5px;font-size:5.5px;line-height:7.5px;color:#dcdcdc">234.40<br>49.47<br>255<br>104660</div>
<div class="t p" style="left:900px;top:145.5px;width:60px;text-align:right;font-size:5.5px;line-height:7.5px;color:#dcdcdc">Level:<br>Count:<br>Percentile:<br>Cache Level:</div>
<div class="t p" style="left:966px;top:168px;font-size:5.5px;color:#dcdcdc">3</div>

<!-- layers panel group -->
<div class="a" style="left:853px;top:179px;width:227px;height:1px;background:#2c2c2c"></div>
<div class="a" style="left:853px;top:180px;width:227px;height:10.5px;background:#3c3c3c"></div>
<div class="a" style="left:853px;top:180px;width:25px;height:10.5px;background:#535353"></div>
<div class="t p" style="left:856px;top:183px;color:#e8e8e8;font-size:6px;font-weight:bold">Layers</div>
<div class="t p" style="left:882px;top:183px;color:#8c8c8c">Channels</div>
<div class="t p" style="left:915px;top:183px;color:#8c8c8c">Paths</div>
<svg class="a" style="left:1069px;top:182px" width="10" height="7"><path d="M4 1.5H10M4 3.5H10M4 5.5H10" stroke="#ccc" stroke-width="1"/><path d="M0 2.5H3L1.5 4Z" fill="#ccc"/></svg>
<div class="a" style="left:853px;top:190.5px;width:227px;height:393.5px;background:#535353"></div>
<div class="sel" style="left:856px;top:194px;width:50px;height:9.5px"></div>
<svg class="a" style="left:859px;top:195px" width="7" height="8" fill="none" stroke="#e0e0e0" stroke-width="1"><circle cx="4.2" cy="3" r="2"/><path d="M2.8 4.5L0.8 7"/></svg>
<div class="t p" style="left:868px;top:196px;font-size:6px">Kind</div>
<svg class="a" style="left:901px;top:195.5px" width="4" height="7"><path d="M0 2.5L2 0.5 4 2.5ZM0 4.5L2 6.5 4 4.5Z" fill="#ccc"/></svg>
<svg class="a" style="left:912px;top:193px" width="80" height="11">
<rect x="1.5" y="1.5" width="8" height="7" fill="#6a6a6a" stroke="#ddd" stroke-width="1"/><path d="M3 7L5 5 8 7" stroke="#ddd" fill="none" stroke-width="0.8"/>
<circle cx="19" cy="5" r="3.2" fill="#e8e8e8"/><path d="M17 7L21 3" stroke="#555" stroke-width="0.9"/>
<path d="M30 1.5H37M33.5 1.5V9M32 9H35" stroke="#e6e6e6" stroke-width="1.2" fill="none"/>
<rect x="45.5" y="2.5" width="6" height="6" fill="none" stroke="#ddd" stroke-width="0.9"/><path d="M44 2.5H46M51 2.5H53M44 8.5H46M51 8.5H53" stroke="#ddd" stroke-width="1"/>
<rect x="58.5" y="5" width="6" height="4.5" fill="#e6e6e6"/><path d="M60 5V3A2 2 0 0 1 64 3" fill="none" stroke="#ddd" stroke-width="0.9"/>
<rect x="73" y="1" width="5" height="9" rx="1" fill="#333"/><rect x="73.5" y="1" width="4" height="4" fill="#777"/>
</svg>
<div class="a" style="left:853px;top:205.5px;width:227px;height:1px;background:#444"></div>
<div class="sel" style="left:856px;top:210px;width:73px;height:10px"></div>
<div class="t p" style="left:861px;top:212.5px;font-size:6px">Normal</div>
<svg class="a" style="left:924px;top:211.5px" width="4" height="7"><path d="M0 2.5L2 0.5 4 2.5ZM0 4.5L2 6.5 4 4.5Z" fill="#ccc"/></svg>
<div class="t p" style="left:934.5px;top:212.5px;font-size:6px">Opacity:</div>
<div class="a" style="left:959.5px;top:209.5px;width:20px;height:11px;background:#3a3a3a"></div>
<div class="t p" style="left:961px;top:212.5px;font-size:5.6px;color:#e8e8e8;letter-spacing:-0.2px">100%</div>
<div class="a" style="left:979.5px;top:209.5px;width:10px;height:11px;background:#606060;border:1px solid #4a4a4a"></div>
<div class="a" style="left:983px;top:214.5px;width:3px;height:1px;background:#ddd"></div>
<div class="a" style="left:853px;top:222px;width:227px;height:1px;background:#444"></div>
<div class="t p" style="left:856px;top:228.5px;font-size:6px">Lock:</div>
<svg class="a" style="left:874px;top:225px" width="50" height="12">
<rect x="1" y="2" width="7" height="7" fill="#bbb"/><path d="M1 2H3.3V4.3H1ZM5.6 2H8V4.3H5.6ZM3.3 4.3H5.6V6.6H3.3ZM1 6.6H3.3V9H1ZM5.6 6.6H8V9H5.6Z" fill="#e8e8e8"/>
<path d="M14 9.5L21 2" stroke="#e6e6e6" stroke-width="1.2"/><path d="M12.5 10C13 8 14.5 7.5 15.5 8.5 14.5 10 13.5 10.2 12.5 10Z" fill="#eee"/>
<path d="M33 1V10M28.5 5.5H37.5" stroke="#ddd" stroke-width="0.9"/><path d="M33 0.5L31.5 2H34.5ZM33 10.5L31.5 9H34.5ZM28 5.5L29.5 4V7ZM38 5.5L36.5 4V7Z" fill="#ddd"/>
<rect x="41" y="5" width="6.5" height="5" fill="#e8e8e8"/><path d="M42.5 5V3.5A1.8 1.8 0 0 1 46 3.5V5" fill="none" stroke="#ddd" stroke-width="1"/>
</svg>
<div class="t p" style="left:948px;top:228.5px;font-size:6px">Fill:</div>
<div class="a" style="left:959.5px;top:226px;width:20px;height:11px;background:#3a3a3a"></div>
<div class="t p" style="left:961px;top:229px;font-size:5.6px;color:#e8e8e8;letter-spacing:-0.2px">100%</div>
<div class="a" style="left:979.5px;top:226px;width:10px;height:11px;background:#606060;border:1px solid #4a4a4a"></div>
<div class="a" style="left:983px;top:231px;width:3px;height:1px;background:#ddd"></div>
<div class="a" style="left:853px;top:239.5px;width:227px;height:1px;background:#3a3a3a"></div>
<!-- layer list -->
<div class="a" style="left:853px;top:240.5px;width:220px;height:344px;background:#474747"></div>
<div class="a" style="left:1072.5px;top:240.5px;width:1px;height:344px;background:#3a3a3a"></div>
<div class="a" style="left:853px;top:240.5px;width:219.5px;height:18px;background:#4d4d4d;border-bottom:1px solid #3c3c3c"></div>
<div class="a" style="left:853px;top:258.5px;width:16px;height:18px;background:#4d4d4d;border-bottom:1px solid #3c3c3c"></div>
<div class="a" style="left:869px;top:258.5px;width:203.5px;height:18px;background:#6c7f9c;border-bottom:1px solid #4a5364"></div>
<div class="a" style="left:853px;top:276.5px;width:219.5px;height:18.5px;background:#4d4d4d;border-bottom:1px solid #3c3c3c"></div>
<div class="a" style="left:869px;top:240.5px;width:1px;height:54px;background:#3e3e3e"></div>
<svg class="a" style="left:856px;top:245px" width="10" height="45" fill="none" stroke="#e4e4e4" stroke-width="0.9">
<path d="M1 4.5Q5 0.5 9 4.5Q5 8.5 1 4.5Z"/><circle cx="5" cy="4.5" r="1.5" fill="#e4e4e4" stroke="none"/>
<path d="M1 22.5Q5 18.5 9 22.5Q5 26.5 1 22.5Z"/><circle cx="5" cy="22.5" r="1.5" fill="#e4e4e4" stroke="none"/>
<path d="M1 40.5Q5 36.5 9 40.5Q5 44.5 1 40.5Z"/><circle cx="5" cy="40.5" r="1.5" fill="#e4e4e4" stroke="none"/>
</svg>
<svg class="a" style="left:872px;top:242px" width="50" height="52">
<defs><pattern id="chk" width="3" height="3" patternUnits="userSpaceOnUse"><rect width="3" height="3" fill="#f4f4f4"/><rect width="1.5" height="1.5" fill="#d0d0d0"/><rect x="1.5" y="1.5" width="1.5" height="1.5" fill="#d0d0d0"/></pattern></defs>
<rect x="0.5" y="0.5" width="19" height="14" fill="url(#chk)" stroke="#222" stroke-width="0.8"/>
<rect x="12" y="7" width="6" height="7" fill="#111"/><path d="M13 8H17M13 10.5H15M15 10.5V13" stroke="#eee" stroke-width="0.8"/>
<rect x="0.5" y="18.5" width="19" height="14" fill="url(#chk)" stroke="#cfd6e2" stroke-width="0.8"/>
<rect x="4" y="23" width="5" height="7" fill="#a0552a"/>
<path d="M22 22.5V28.5" stroke="#dde" stroke-width="2" stroke-dasharray="2 1"/>
<rect x="26.5" y="18.5" width="20" height="14" fill="#000" stroke="#dfe4ec" stroke-width="1"/>
<path d="M33 22V28H37V25.5H35V22Z" fill="#fff"/>
<rect x="0.5" y="36.5" width="19" height="14" fill="#fbfbfb" stroke="#222" stroke-width="0.8"/>
<path d="M3 40H7M3 42.5H6M3 47H17" stroke="#999" stroke-width="0.7"/>
</svg>
<div class="t p" style="left:897px;top:247px;font-size:6.3px;color:#dcdcdc">3 copy 2</div>
<div class="t p" style="left:924px;top:265px;font-size:6.3px;color:#e8ecf2">3 copy</div>
<div class="t p" style="left:897px;top:283px;font-size:6.3px;color:#dcdcdc">Layer 0</div>
<div class="a" style="left:1073.5px;top:240.5px;width:6.5px;height:344px;background:#535353"></div>

</body></html>
